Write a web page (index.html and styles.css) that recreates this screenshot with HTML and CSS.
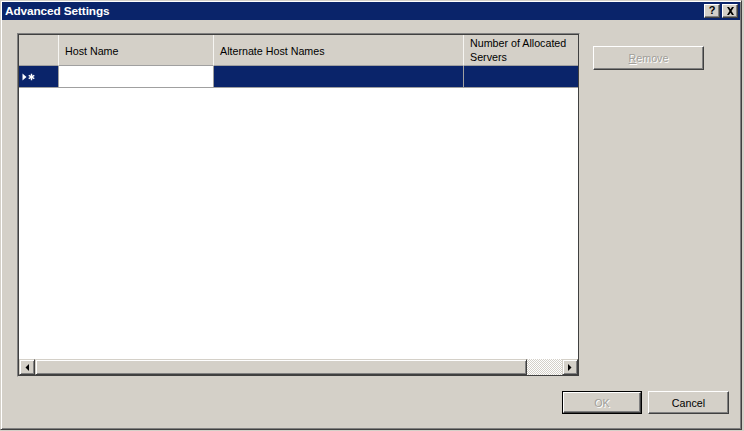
FILE: index.html
```html
<!DOCTYPE html>
<html>
<head>
<meta charset="utf-8">
<link rel="stylesheet" href="styles.css">
</head>
<body>
<div class="window">
  <div class="titlebar">
    <span class="title">Advanced Settings</span>
    <div class="tbtns">
      <span class="tbtn">?</span>
      <span class="tbtn close">
        <svg width="9" height="8" viewBox="0 0 9 8"><path d="M1 0h2l1.5 2.2L6 0h2L5.5 4 8 8H6L4.5 5.8 3 8H1l2.5-4z" fill="#000"/></svg>
      </span>
    </div>
  </div>
  <div class="main">
    <div class="grid">
      <div class="hdr">
        <div class="c c0 hc"></div>
        <div class="c c1 hc"><span>Host Name</span></div>
        <div class="c c2 hc"><span>Alternate Host Names</span></div>
        <div class="c c3 hc last"><span>Number of Allocated Servers</span></div>
      </div>
      <div class="row">
        <div class="c c0 sel rh">
          <svg width="14" height="8" viewBox="0 0 14 8">
            <path d="M0.5 0.5l4 3.5-4 3.5z" fill="#fff"/>
            <path d="M9.5 0.8v6.4M6.7 2.4l5.6 3.2M6.7 5.6l5.6-3.2" stroke="#fff" stroke-width="1.4"/>
          </svg>
        </div>
        <div class="c c1 cur"></div>
        <div class="c c2 sel"></div>
        <div class="c c3 sel last"></div>
      </div>
      <div class="empty"></div>
      <div class="hscroll">
        <div class="sbtn"><svg width="4" height="7" viewBox="0 0 4 7"><path d="M4 0v7L0.5 3.5z" fill="#000"/></svg></div>
        <div class="thumb"></div>
        <div class="track"></div>
        <div class="sbtn"><svg width="4" height="7" viewBox="0 0 4 7"><path d="M0 0v7l3.5-3.5z" fill="#000"/></svg></div>
      </div>
    </div>
    <div class="side">
      <div class="btn remove disabled"><span><u>R</u>emove</span></div>
    </div>
  </div>
  <div class="footer">
    <div class="default"><div class="btn ok disabled"><span>OK</span></div></div>
    <div class="btn cancel"><span>Cancel</span></div>
  </div>
</div>
</body>
</html>
```

FILE: styles.css
```css
html, body {
  margin: 0;
  padding: 0;
}
body {
  width: 744px;
  height: 431px;
  background: #d4d0c8;
  font-family: "Liberation Sans", Arial, sans-serif;
  font-size: 10.7px;
  color: #000;
  overflow: hidden;
}
.window {
  width: 742px;
  height: 430px;
  box-sizing: border-box;
  border-top: 1px solid #d4d0c8;
  border-left: 1px solid #d4d0c8;
  border-right: 1px solid #404040;
  border-bottom: 1px solid #404040;
  box-shadow: inset 1px 1px #fff, inset -1px -1px #808080;
  padding: 1px;
  display: flex;
  flex-direction: column;
}
.titlebar {
  height: 18px;
  background: #0a246a;
  display: flex;
  align-items: center;
  justify-content: space-between;
  padding-left: 3px;
  padding-right: 2px;
  flex: none;
}
.title {
  color: #fff;
  font-weight: bold;
  font-size: 11.8px;
  letter-spacing: -0.1px;
}
.tbtns {
  display: flex;
  gap: 2px;
}
.tbtn {
  width: 16px;
  height: 14px;
  box-sizing: border-box;
  background: #d4d0c8;
  border-top: 1px solid #fff;
  border-left: 1px solid #fff;
  border-right: 1px solid #404040;
  border-bottom: 1px solid #404040;
  box-shadow: inset -1px -1px #808080;
  display: flex;
  align-items: center;
  justify-content: center;
  font-weight: bold;
  font-size: 11px;
  line-height: 1;
  padding-bottom: 1px;
}
.main {
  display: flex;
  padding: 13px 0 0 15px;
  gap: 13px;
  flex: none;
}
.grid {
  width: 563px;
  height: 344px;
  box-sizing: border-box;
  border-top: 1px solid #808080;
  border-left: 1px solid #808080;
  border-right: 1px solid #d4d0c8;
  border-bottom: 1px solid #d4d0c8;
  box-shadow: inset 1px 1px #404040, inset -1px -1px #404040;
  padding: 1px;
  background: #fff;
  display: flex;
  flex-direction: column;
}
.hdr, .row {
  display: flex;
  flex: none;
}
.hdr {
  height: 31px;
}
.row {
  height: 22px;
}
.c {
  box-sizing: border-box;
  flex: none;
}
.c0 { width: 40px; }
.c1 { width: 155px; }
.c2 { width: 250px; }
.c3 { width: 114px; }
.hc {
  background: #d4d0c8;
  border-right: 1px solid #f6f5f2;
  border-bottom: 1px solid #a0a0a0;
  display: flex;
  align-items: center;
  padding-left: 6px;
  padding-top: 2px;
  line-height: 14px;
}
.hc.c0 { padding: 0; }
.hc.last { border-right: none; padding-right: 4px; padding-top: 0; }
.row .c {
  border-right: 1px solid #a0a0a0;
  border-bottom: 1px solid #a0a0a0;
}
.row .last { border-right: none; }
.sel { background: #0a246a; }
.cur { background: #fff; }
.rh {
  display: flex;
  align-items: center;
  padding-left: 3px;
}
.empty {
  flex: 1;
  background: #fff;
}
.hscroll {
  height: 16px;
  display: flex;
  flex: none;
}
.sbtn {
  width: 16px;
  height: 16px;
  box-sizing: border-box;
  background: #d4d0c8;
  border-top: 1px solid #d4d0c8;
  border-left: 1px solid #d4d0c8;
  border-right: 1px solid #404040;
  border-bottom: 1px solid #404040;
  box-shadow: inset 1px 1px #fff, inset -1px -1px #808080;
  display: flex;
  align-items: center;
  justify-content: center;
}
.thumb {
  width: 492px;
  box-sizing: border-box;
  background: #d4d0c8;
  border-top: 1px solid #d4d0c8;
  border-left: 1px solid #d4d0c8;
  border-right: 1px solid #404040;
  border-bottom: 1px solid #404040;
  box-shadow: inset 1px 1px #fff, inset -1px -1px #808080;
}
.track {
  flex: 1;
  background-color: #ebe9e4;
  background-image: repeating-conic-gradient(#fff 0 25%, #d4d0c8 0 50%);
  background-size: 2px 2px;
}
.side {
  padding-top: 13px;
}
.btn {
  box-sizing: border-box;
  background: #d4d0c8;
  border-top: 1px solid #fff;
  border-left: 1px solid #fff;
  border-right: 1px solid #404040;
  border-bottom: 1px solid #404040;
  box-shadow: inset -1px -1px #808080;
  display: flex;
  align-items: center;
  justify-content: center;
}
.btn.disabled span {
  color: #a19f9a;
  text-shadow: 1px 1px #fff;
}
.remove {
  width: 111px;
  height: 24px;
}
.footer {
  margin-top: auto;
  display: flex;
  justify-content: flex-end;
  align-items: center;
  gap: 6px;
  padding-right: 11px;
  padding-bottom: 14px;
}
.default {
  border: 1px solid #000;
  width: 80px;
  height: 23px;
  box-sizing: border-box;
}
.ok {
  width: 78px;
  height: 21px;
}
.cancel {
  width: 81px;
  height: 23px;
}
```
